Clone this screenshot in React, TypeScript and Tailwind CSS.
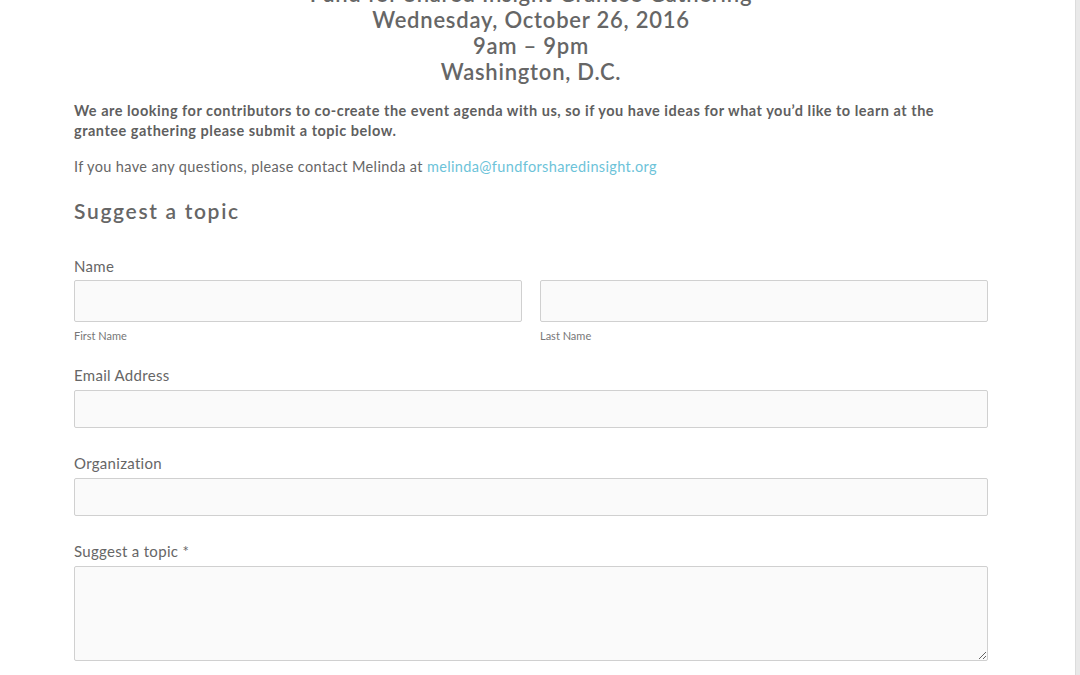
import React from 'react'

const font = { fontFamily: 'Lato, "Open Sans", sans-serif' }

function Field({ label, children }: { label: string; children: React.ReactNode }) {
  return (
    <div className="mb-[25px]">
      <div className="text-[15px] leading-5 text-[#666] tracking-[0.02em] mb-[5px]">{label}</div>
      {children}
    </div>
  )
}

const inputCls =
  'block w-full h-[38px] bg-[#fafafa] border border-[#d0d0d0] rounded-[2px] outline-none px-2'

export default function App() {
  return (
    <div className="flex w-[1080px] h-[675px] overflow-hidden bg-white" style={font}>
      <div className="flex-1">
        <div className="ml-[74px] w-[914px] -mt-[19px]">
          {/* Event heading */}
          <div className="text-center text-[22px] leading-[26px] font-semibold text-[#666] tracking-[0.035em]">
            <div>Fund for Shared Insight Grantee Gathering</div>
            <div>Wednesday, October 26, 2016</div>
            <div>9am – 9pm</div>
            <div>Washington, D.C.</div>
          </div>

          <p className="mt-4 text-[14.5px] leading-5 font-bold text-[#5f5f5f] tracking-[0.035em]">
            We are looking for contributors to co-create the event agenda with us, so if you have ideas for what you’d like to learn at the
            <br />
            grantee gathering please submit a topic below.
          </p>
          <p className="mt-4 text-[14.5px] leading-5 text-[#666] tracking-[0.025em]">
            If you have any questions, please contact Melinda at{' '}
            <a className="text-[#6cc3d9]">melinda@fundforsharedinsight.org</a>
          </p>

          <h2 className="mt-5 text-[21px] leading-7 font-semibold text-[#666] tracking-[0.08em]">Suggest a topic</h2>

          {/* Form */}
          <div className="mt-[31px]">
            <div className="mb-[21px]">
              <div className="text-[15px] leading-5 text-[#666] tracking-[0.02em] mb-[4px]">Name</div>
              <div className="grid grid-cols-2 gap-[18px]">
                <div>
                  <input className={inputCls + ' h-[42px]'} />
                  <div className="mt-[6px] text-[11px] leading-4 text-[#777]">First Name</div>
                </div>
                <div>
                  <input className={inputCls + ' h-[42px]'} />
                  <div className="mt-[6px] text-[11px] leading-4 text-[#777]">Last Name</div>
                </div>
              </div>
            </div>

            <Field label="Email Address">
              <input className={inputCls} />
            </Field>
            <Field label="Organization">
              <input className={inputCls} />
            </Field>
            <Field label="Suggest a topic *">
              <textarea className="block w-full h-[95px] bg-[#fafafa] border border-[#d0d0d0] rounded-[2px] outline-none p-2" />
            </Field>
          </div>
        </div>
      </div>
      {/* scroll track */}
      <div className="w-[5px] h-full bg-[#e9e9e9] border-l border-[#dcdcdc]" />
    </div>
  )
}
